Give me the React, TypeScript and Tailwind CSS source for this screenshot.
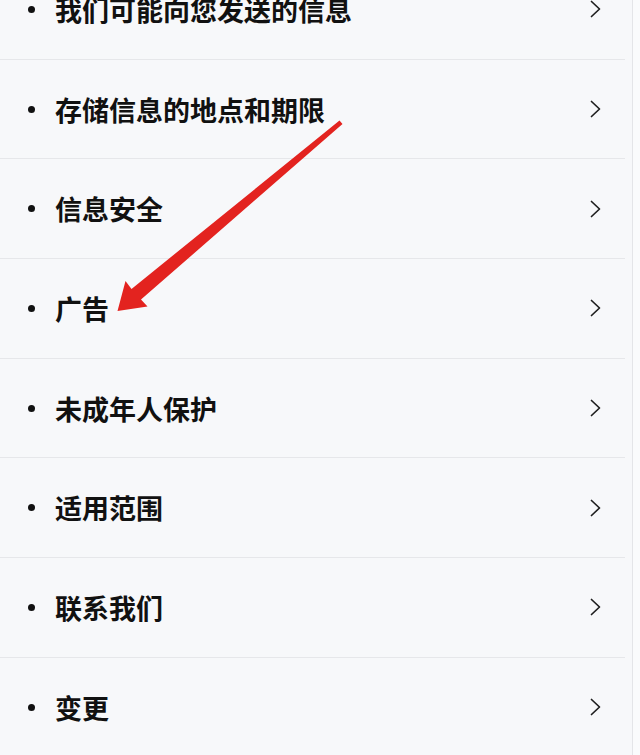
import React from 'react';

const items = [
  '我们可能向您发送的信息',
  '存储信息的地点和期限',
  '信息安全',
  '广告',
  '未成年人保护',
  '适用范围',
  '联系我们',
  '变更',
];

const Chevron: React.FC = () => (
  <svg width="11" height="18" viewBox="0 0 11 18" fill="none">
    <path d="M1.5 1.5 L9.5 9 L1.5 16.5" stroke="#1f1f1f" strokeWidth="1.7" strokeLinecap="round" strokeLinejoin="round" />
  </svg>
);

// red annotation arrow drawn on top of the list
const Arrow: React.FC = () => (
  <svg className="absolute left-0 top-0 pointer-events-none" width="640" height="755" viewBox="0 0 640 755">
    <polygon
      points="339.5,120.5 342.5,124 141,299.5 147.5,306.5 117.5,311 125.5,281 131.5,289"
      fill="#e3231f"
    />
  </svg>
);

export default function App() {
  return (
    <div
      className="relative w-[640px] h-[755px] overflow-hidden bg-[#f7f8fa]"
      style={{ fontFamily: '"Noto Sans CJK SC", "Noto Sans", sans-serif' }}
    >
      <div className="flex h-full">
        <div className="w-[633px] border-r border-[#e4e5e8]">
          <div className="-mt-[40px]">
            {items.map((label) => (
              <div key={label} className="w-[625px] h-[99.7px] flex items-center border-b border-[#e6e7ea] pl-[28px] pr-[24px]">
                <span className="w-[7px] h-[7px] rounded-full bg-[#111]" />
                <span className="ml-[20px] flex-1 text-[27px] font-bold text-[#111] leading-none">{label}</span>
                <Chevron />
              </div>
            ))}
          </div>
        </div>
        <div className="flex-1 bg-[#fafbfc]" />
      </div>
      <Arrow />
    </div>
  );
}
